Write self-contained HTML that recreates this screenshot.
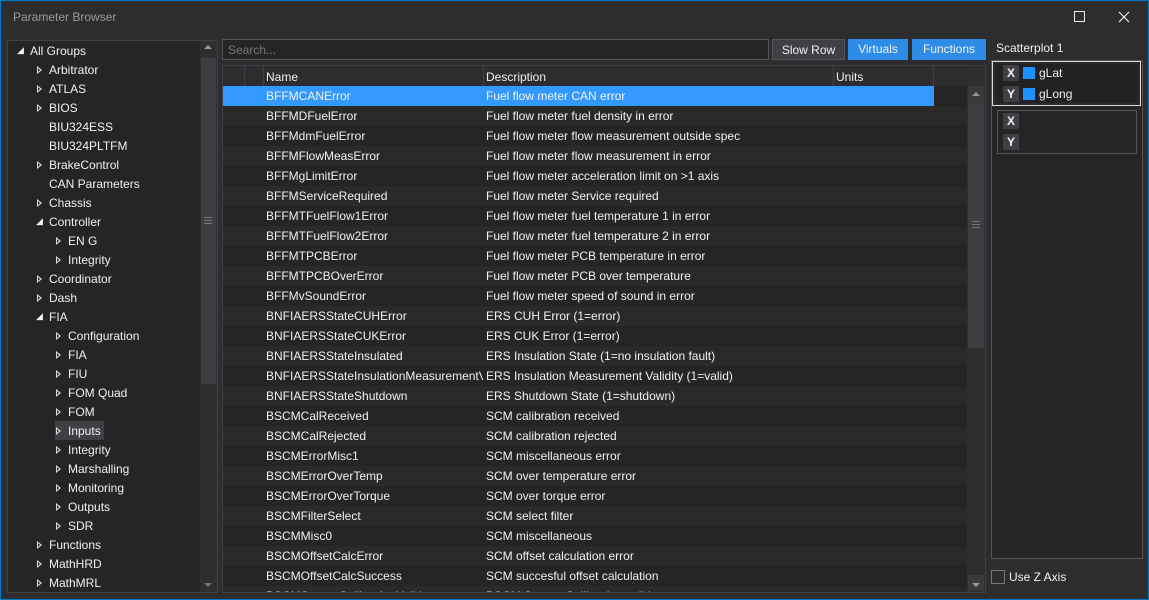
<!DOCTYPE html>
<html><head><meta charset="utf-8"><style>
*{box-sizing:border-box;margin:0;padding:0}
body{width:1149px;height:600px;background:#2d2d30;font-family:"Liberation Sans",sans-serif;font-size:12px;color:#f1f1f1;position:relative;overflow:hidden}
.abs{position:absolute}
#win{left:0;top:0;width:1149px;height:600px;border:1px solid #007acc;border-top-color:#007acc}
.tree div{position:absolute;height:19px;line-height:19px;white-space:nowrap}
.arr{position:absolute;width:0;height:0;border-top:4px solid transparent;border-bottom:4px solid transparent;border-left:5px solid #ddd}
.arr:after{content:"";position:absolute;left:-4px;top:-2px;border-top:2px solid transparent;border-bottom:2px solid transparent;border-left:2px solid #252526}
.row{position:absolute;left:223px;width:744px;height:20px;line-height:21px;white-space:nowrap;overflow:hidden}
.row span{position:absolute}
.c1{left:43px;width:217px;overflow:hidden}
.c2{left:263px}
.btn{position:absolute;top:39px;height:21px;line-height:21px;text-align:center;font-size:12px}
</style></head><body>
<div class="abs" style="left:0;top:0;width:1149px;height:34px;background:#2d2d30"></div>
<div class="abs" style="left:13px;top:10px;color:#999">Parameter Browser</div>
<div class="abs" style="left:1074px;top:11px;width:11px;height:11px;border:1px solid #eee"></div>
<svg class="abs" style="left:1118px;top:11px" width="12" height="12"><path d="M1 1L11 11M11 1L1 11" stroke="#eee" stroke-width="1.2"/></svg>

<div class="abs" style="left:7px;top:40px;width:211px;height:553px;background:#252526;border:1px solid #3f3f46"></div>
<div class="abs" style="left:200px;top:41px;width:17px;height:551px;background:#2e2e30"></div>
<div class="abs" style="left:201px;top:58px;width:15px;height:326px;background:#3e3e42"></div>
<div class="abs" style="left:204px;top:45px;border-left:4px solid transparent;border-right:4px solid transparent;border-bottom:4px solid #999"></div>
<div class="abs" style="left:204px;top:583px;border-left:4px solid transparent;border-right:4px solid transparent;border-top:4px solid #777"></div>
<div class="abs" style="left:204px;top:217px;width:8px;height:7px;border-top:1px solid #777;border-bottom:1px solid #777"><div style="margin-top:2px;border-top:1px solid #777"></div></div>
<div class="abs" style="left:55px;top:421px;width:49px;height:19px;background:#3f3f46"></div>
<div class="tree" id="tree"></div>

<div class="abs" style="left:222px;top:39px;width:547px;height:21px;background:#252526;border:1px solid #555"></div>
<div class="abs" style="left:228px;top:43px;color:#777">Search...</div>
<div class="btn" style="left:772px;width:73px;background:#3f3f46;border:1px solid #555">Slow Row</div>
<div class="btn" style="left:848px;width:60px;background:#2c8ce6">Virtuals</div>
<div class="btn" style="left:912px;width:74px;background:#2c8ce6">Functions</div>

<div class="abs" style="left:222px;top:65px;width:764px;height:528px;background:#252526;border:1px solid #3f3f46"></div>
<div class="abs" style="left:223px;top:66px;width:744px;height:20px;background:#2d2d30"></div>
<div class="abs" style="left:244px;top:66px;height:20px;border-left:1px solid #3f3f46"></div>
<div class="abs" style="left:263px;top:66px;height:20px;border-left:1px solid #3f3f46"></div>
<div class="abs" style="left:483px;top:66px;height:20px;border-left:1px solid #3f3f46"></div>
<div class="abs" style="left:833px;top:66px;height:20px;border-left:1px solid #3f3f46"></div>
<div class="abs" style="left:933px;top:66px;height:20px;border-left:1px solid #3f3f46"></div>
<div class="abs" style="left:266px;top:70px">Name</div>
<div class="abs" style="left:486px;top:70px">Description</div>
<div class="abs" style="left:836px;top:70px">Units</div>
<div id="rows"></div>
<div class="abs" style="left:967px;top:66px;width:18px;height:526px;background:#2e2e30"></div>
<div class="abs" style="left:968px;top:86px;width:16px;height:18px;background:#3a3a3d"></div>
<div class="abs" style="left:972px;top:92px;border-left:4px solid transparent;border-right:4px solid transparent;border-bottom:4px solid #999"></div>
<div class="abs" style="left:968px;top:104px;width:16px;height:244px;background:#3e3e42"></div>
<div class="abs" style="left:968px;top:575px;width:16px;height:16px;background:#3a3a3d"></div>
<div class="abs" style="left:972px;top:583px;border-left:4px solid transparent;border-right:4px solid transparent;border-top:4px solid #999"></div>
<div class="abs" style="left:972px;top:221px;width:8px;height:7px;border-top:1px solid #777;border-bottom:1px solid #777"><div style="margin-top:2px;border-top:1px solid #777"></div></div>

<div class="abs" style="left:996px;top:41px">Scatterplot 1</div>
<div class="abs" style="left:991px;top:60px;width:152px;height:499px;background:#252526;border:1px solid #555"></div>
<div class="abs" style="left:992px;top:61px;width:149px;height:45px;border:1px solid #ddd;background:#2a2a2a"></div>
<div class="abs" style="left:996px;top:64px;width:141px;height:39px;background:#222"></div>
<div class="abs" style="left:997px;top:110px;width:140px;height:44px;border:1px solid #555"></div>
<div class="abs" style="left:1003px;top:65px;width:16px;height:16px;background:#3f3f46;text-align:center;line-height:16px;font-weight:bold">X</div>
<div class="abs" style="left:1003px;top:86px;width:16px;height:16px;background:#3f3f46;text-align:center;line-height:16px;font-weight:bold">Y</div>
<div class="abs" style="left:1023px;top:67px;width:12px;height:12px;background:#1e90ff"></div>
<div class="abs" style="left:1023px;top:88px;width:12px;height:12px;background:#1e90ff"></div>
<div class="abs" style="left:1039px;top:66px">gLat</div>
<div class="abs" style="left:1039px;top:87px">gLong</div>
<div class="abs" style="left:1003px;top:113px;width:16px;height:16px;background:#3f3f46;text-align:center;line-height:16px;font-weight:bold">X</div>
<div class="abs" style="left:1003px;top:134px;width:16px;height:16px;background:#3f3f46;text-align:center;line-height:16px;font-weight:bold">Y</div>
<div class="abs" style="left:991px;top:570px;width:14px;height:14px;border:1px solid #777"></div>
<div class="abs" style="left:1009px;top:570px">Use Z Axis</div>
<div class="abs" id="win"></div>
<script>
var t=[[0,'All Groups',2],[1,'Arbitrator',1],[1,'ATLAS',1],[1,'BIOS',1],[1,'BIU324ESS',0],[1,'BIU324PLTFM',0],[1,'BrakeControl',1],[1,'CAN Parameters',0],[1,'Chassis',1],[1,'Controller',2],[2,'EN G',1],[2,'Integrity',1],[1,'Coordinator',1],[1,'Dash',1],[1,'FIA',2],[2,'Configuration',1],[2,'FIA',1],[2,'FIU',1],[2,'FOM Quad',1],[2,'FOM',1],[2,'Inputs',1],[2,'Integrity',1],[2,'Marshalling',1],[2,'Monitoring',1],[2,'Outputs',1],[2,'SDR',1],[1,'Functions',1],[1,'MathHRD',1],[1,'MathMRL',1]];
var h='';t.forEach(function(e,i){var y=42+i*19,tx=30+e[0]*19,ax=tx-13;
if(e[2]==1)h+='<span class="arr" style="left:'+(ax+1)+'px;top:'+(y+5)+'px"></span>';
if(e[2]==2)h+='<div style="left:'+ax+'px;top:'+(y-1)+'px;font-size:9px">◢</div>';
h+='<div style="left:'+tx+'px;top:'+y+'px">'+e[1]+'</div>';});
document.getElementById('tree').innerHTML=h;
var r=[['BFFMCANError','Fuel flow meter CAN error'],['BFFMDFuelError','Fuel flow meter fuel density in error'],['BFFMdmFuelError','Fuel flow meter flow measurement outside spec'],['BFFMFlowMeasError','Fuel flow meter flow measurement in error'],['BFFMgLimitError','Fuel flow meter acceleration limit on >1 axis'],['BFFMServiceRequired','Fuel flow meter Service required'],['BFFMTFuelFlow1Error','Fuel flow meter fuel temperature 1 in error'],['BFFMTFuelFlow2Error','Fuel flow meter fuel temperature 2 in error'],['BFFMTPCBError','Fuel flow meter PCB temperature in error'],['BFFMTPCBOverError','Fuel flow meter PCB over temperature'],['BFFMvSoundError','Fuel flow meter speed of sound in error'],['BNFIAERSStateCUHError','ERS CUH Error (1=error)'],['BNFIAERSStateCUKError','ERS CUK Error (1=error)'],['BNFIAERSStateInsulated','ERS Insulation State (1=no insulation fault)'],['BNFIAERSStateInsulationMeasurementValid','ERS Insulation Measurement Validity (1=valid)'],['BNFIAERSStateShutdown','ERS Shutdown State (1=shutdown)'],['BSCMCalReceived','SCM calibration received'],['BSCMCalRejected','SCM calibration rejected'],['BSCMErrorMisc1','SCM miscellaneous error'],['BSCMErrorOverTemp','SCM over temperature error'],['BSCMErrorOverTorque','SCM over torque error'],['BSCMFilterSelect','SCM select filter'],['BSCMMisc0','SCM miscellaneous'],['BSCMOffsetCalcError','SCM offset calculation error'],['BSCMOffsetCalcSuccess','SCM succesful offset calculation'],['BSCMSensorCalibrationValid','BSCM Sensor Calibration valid']];
h='';r.forEach(function(e,i){var y=86+i*20,bg=i==0?'#3399ff':(i%2?'#2a2a2b':'#252526');var hh=i==25?6:20;
h+='<div class="row" style="top:'+y+'px;height:'+hh+'px;background:'+bg+';'+(i==0?'width:711px':'')+'"><span class="c1">'+e[0]+'</span><span class="c2">'+e[1]+'</span></div>';});
document.getElementById('rows').innerHTML=h;
</script>
</body></html>
